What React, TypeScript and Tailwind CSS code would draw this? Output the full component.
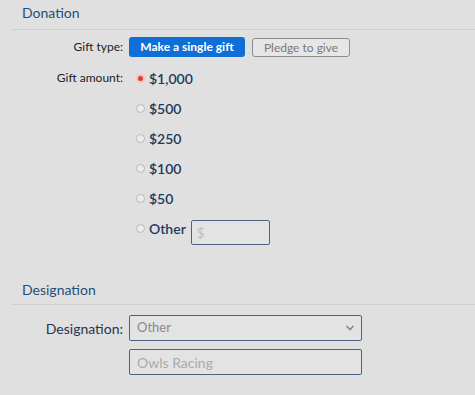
import React, { useState } from 'react';

const amounts = ['$1,000', '$500', '$250', '$100', '$50'];

const Radio: React.FC<{ checked: boolean }> = ({ checked }) =>
    checked ? (
        <span className="ml-[8px] w-[9px] h-[9px] rounded-full bg-[#f4c4c4] flex items-center justify-center shrink-0">
            <span className="w-[5px] h-[5px] rounded-full bg-[#e23b3b]" />
        </span>
    ) : (
        <span className="ml-[8px] w-[9px] h-[9px] rounded-full border border-[#b8b8b8] bg-[#ececec] shrink-0" />
    );

const App: React.FC = () => {
    const [amount, setAmount] = useState('$1,000');

    return (
        <div className="w-[475px] h-[395px] bg-[#e0e0e0] overflow-hidden" style={{ fontFamily: 'Lato, "Open Sans", sans-serif' }}>
            <div className="ml-3 h-[30px] pl-[10px] pb-[4px] flex items-center border-b border-[#cfcfcf] text-[14px] text-[#1f4f7a]">
                Donation
            </div>

            <div className="mt-[7px] flex items-center h-[20px]">
                <div className="w-[123px] text-right text-[12px] text-[#222]">Gift type:</div>
                <button className="ml-[6px] h-[20px] w-[116px] rounded-[3px] bg-[#0f6fd7] text-white text-[12px] font-bold">
                    Make a single gift
                </button>
                <button className="ml-[7px] h-[19px] w-[98px] rounded-[3px] border border-[#8c8c8c] bg-[#e6e6e6] text-[#7a7a7a] text-[12px]">
                    Pledge to give
                </button>
            </div>

            <div className="mt-[6px] flex">
                <div className="w-[123px] h-[30px] flex items-center justify-end text-[12px] text-[#222]">Gift amount:</div>
                <div className="ml-[5px] flex flex-col">
                    {amounts.map(a => (
                        <div key={a} className="h-[30px] flex items-center cursor-pointer" onClick={() => setAmount(a)}>
                            <Radio checked={amount === a} />
                            <span className="ml-[4px] text-[14px] font-semibold text-[#1b3a5c]">{a}</span>
                        </div>
                    ))}
                    <div className="h-[30px] flex items-center">
                        <div className="flex items-center cursor-pointer" onClick={() => setAmount('Other')}>
                            <Radio checked={amount === 'Other'} />
                            <span className="ml-[4px] text-[14px] font-semibold text-[#1b3a5c]">Other</span>
                        </div>
                        <input
                            className="ml-[5px] self-start mt-[7px] w-[79px] h-[25px] border border-[#4b6283] rounded-[2px] bg-[#e3e3e3] px-[5px] text-[13px] text-[#333] placeholder-[#bbb] outline-none"
                            placeholder="$"
                        />
                    </div>
                </div>
            </div>

            <div className="mt-[32px] ml-3 h-[30px] pl-[10px] flex items-center border-b border-[#cfcfcf] text-[14px] text-[#1f4f7a]">
                Designation
            </div>

            <div className="mt-[10px] flex">
                <div className="w-[123px] h-[26px] flex items-center justify-end text-[14px] text-[#1f3550]">Designation:</div>
                <div className="ml-[6px] flex flex-col gap-[8px]">
                    <div className="relative w-[233px] h-[26px] border border-[#4b6283] rounded-[2px] bg-[#e3e3e3] flex items-center pl-[7px] text-[13px] text-[#8a8a8a]">
                        Other
                        <svg className="absolute right-[6px] top-[8px]" width="10" height="8" viewBox="0 0 10 8">
                            <path d="M1.5 2 L5 5.5 L8.5 2" fill="none" stroke="#8a8a8a" strokeWidth="1.6" />
                        </svg>
                    </div>
                    <input
                        className="w-[233px] h-[26px] border border-[#4b6283] rounded-[2px] bg-[#e3e3e3] px-[7px] text-[14px] text-[#333] placeholder-[#ababab] outline-none"
                        placeholder="Owls Racing"
                    />
                </div>
            </div>
        </div>
    );
};

export default App;
